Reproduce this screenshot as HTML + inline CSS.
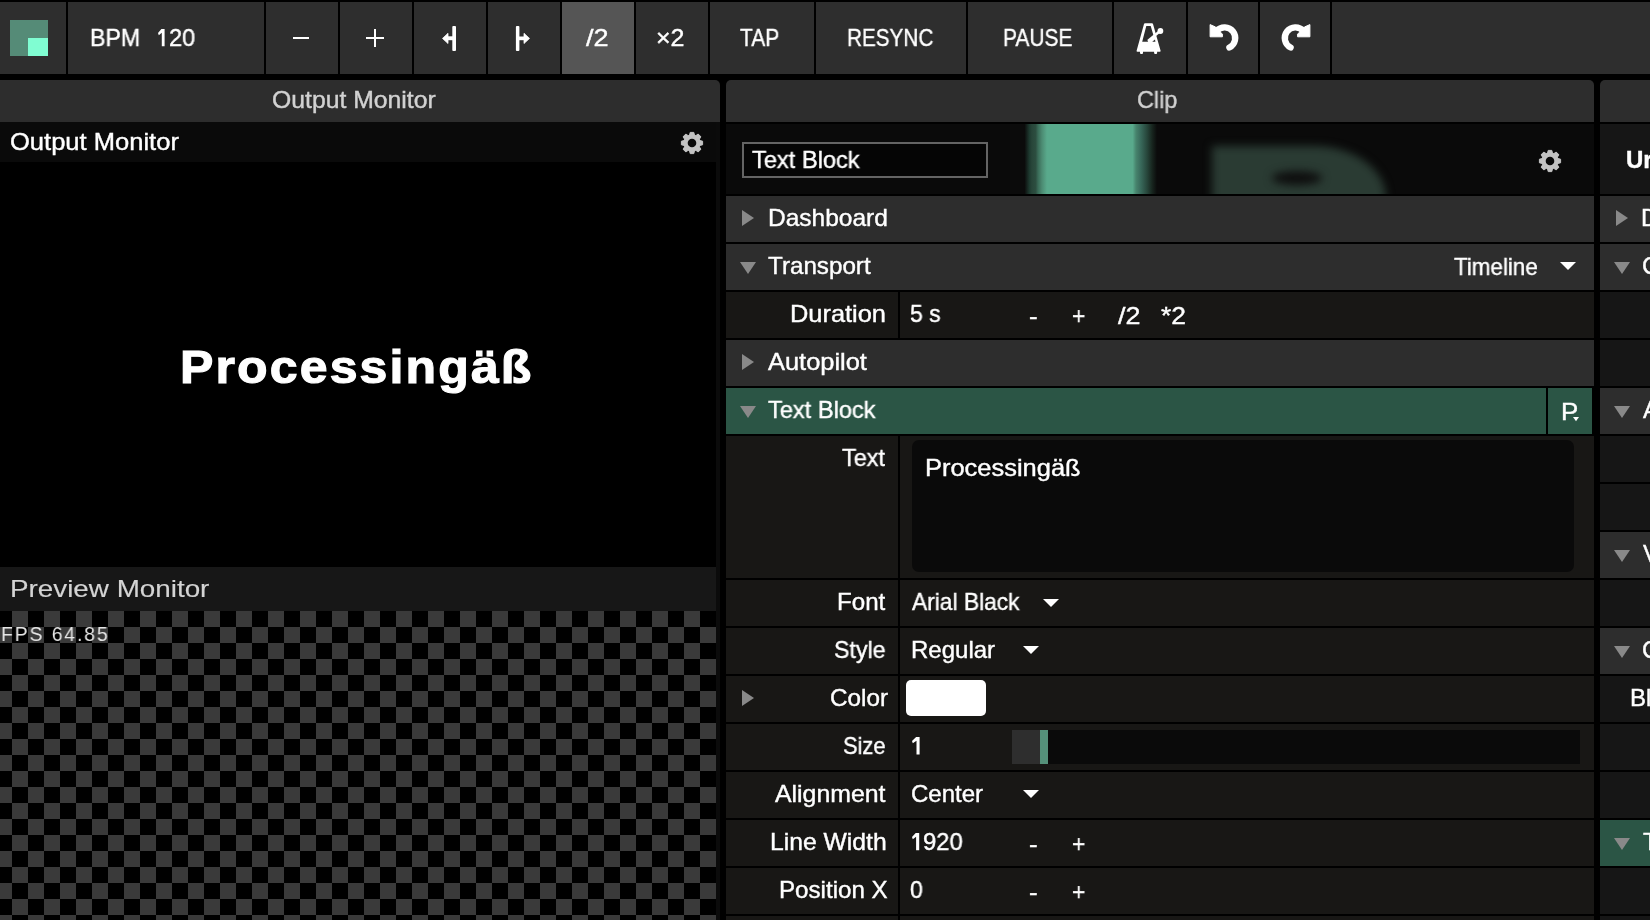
<!DOCTYPE html>
<html><head><meta charset="utf-8"><style>
html,body{margin:0;padding:0;}
body{width:1650px;height:920px;background:#000;position:relative;overflow:hidden;font-family:"Liberation Sans",sans-serif;}
body>div{position:absolute;}
.t{white-space:pre;-webkit-text-stroke:0.4px currentColor;will-change:transform;}
</style></head><body>
<div style="left:0px;top:2px;width:66px;height:72px;background:#2e2e2e;"></div>
<div style="left:68px;top:2px;width:196px;height:72px;background:#2e2e2e;"></div>
<div style="left:266px;top:2px;width:72px;height:72px;background:#2e2e2e;"></div>
<div style="left:340px;top:2px;width:72px;height:72px;background:#2e2e2e;"></div>
<div style="left:414px;top:2px;width:72px;height:72px;background:#2e2e2e;"></div>
<div style="left:488px;top:2px;width:72px;height:72px;background:#2e2e2e;"></div>
<div style="left:562px;top:2px;width:72px;height:72px;background:#555555;"></div>
<div style="left:636px;top:2px;width:72px;height:72px;background:#2e2e2e;"></div>
<div style="left:710px;top:2px;width:104px;height:72px;background:#2e2e2e;"></div>
<div style="left:816px;top:2px;width:150px;height:72px;background:#2e2e2e;"></div>
<div style="left:968px;top:2px;width:144px;height:72px;background:#2e2e2e;"></div>
<div style="left:1114px;top:2px;width:72px;height:72px;background:#2e2e2e;"></div>
<div style="left:1188px;top:2px;width:70px;height:72px;background:#2e2e2e;"></div>
<div style="left:1260px;top:2px;width:70px;height:72px;background:#2e2e2e;"></div>
<div style="left:1332px;top:2px;width:318px;height:72px;background:#2e2e2e;"></div>
<div style="left:10px;top:20px;width:38px;height:36px;background:#558b77;"></div>
<div style="left:28px;top:38px;width:20px;height:18px;background:#80fdd2;"></div>
<div class="t" style="left:89.77px;top:26.00px;font-size:24px;line-height:24px;color:#fff;transform:scaleX(0.9646);transform-origin:0 0;">BPM</div>
<svg style="position:absolute;left:156.7px;top:27.8px;" width="9" height="19" viewBox="0 0 9 19"><polygon points="7.60,1.00 7.60,18.30 4.80,18.30 4.80,4.70 1.80,7.30 1.00,5.00 4.40,1.00" fill="#fff"/></svg>
<div class="t" style="left:168.72px;top:26.00px;font-size:24px;line-height:24px;color:#fff;transform:scaleX(0.9840);transform-origin:0 0;">20</div>
<div style="left:293px;top:36.5px;width:16px;height:2.0px;background:#fff;"></div>
<div style="left:366px;top:36.5px;width:18px;height:2.0px;background:#fff;"></div>
<div style="left:374px;top:28.5px;width:2px;height:18.0px;background:#fff;"></div>
<svg style="position:absolute;left:440px;top:24px;" width="20" height="30" viewBox="0 0 20 30"><rect x="12.3" y="2" width="3.7" height="25" rx="0.9" fill="#fff"/><rect x="7" y="12.3" width="7" height="3.9" fill="#fff"/><polygon points="2.5,14.4 8,9.3 8,19.5" fill="#fff" stroke="#fff" stroke-width="0.8" stroke-linejoin="round"/></svg>
<svg style="position:absolute;left:510px;top:24px;" width="24" height="30" viewBox="0 0 24 30"><rect x="5.9" y="2" width="3.5" height="25" rx="0.9" fill="#fff"/><rect x="8" y="12.5" width="7" height="3.7" fill="#fff"/><polygon points="19.5,14.4 14,9.3 14,19.5" fill="#fff" stroke="#fff" stroke-width="0.8" stroke-linejoin="round"/></svg>
<div class="t" style="left:585.80px;top:26.00px;font-size:24px;line-height:24px;color:#fff;transform:scaleX(1.1263);transform-origin:0 0;">/2</div>
<div class="t" style="left:655.92px;top:26.00px;font-size:24px;line-height:24px;color:#fff;transform:scaleX(1.0417);transform-origin:0 0;">×2</div>
<div class="t" style="left:740.30px;top:26.00px;font-size:24px;line-height:24px;color:#fff;transform:scaleX(0.8705);transform-origin:0 0;">TAP</div>
<div class="t" style="left:847.27px;top:26.00px;font-size:24px;line-height:24px;color:#fff;transform:scaleX(0.8629);transform-origin:0 0;">RESYNC</div>
<div class="t" style="left:1003.25px;top:26.00px;font-size:24px;line-height:24px;color:#fff;transform:scaleX(0.8727);transform-origin:0 0;">PAUSE</div>
<svg style="position:absolute;left:1130px;top:18px;" width="40" height="40" viewBox="0 0 40 40"><path fill="#fff" fill-rule="evenodd" d="M15 5.2 L22 5.2 Q22.8 5.2 23 6 L30.6 32.8 Q30.8 33.8 29.8 33.8 L7.4 33.8 Q6.4 33.8 6.6 32.8 L14 6 Q14.2 5.2 15 5.2 Z M16.3 8 L20.7 8 L23.5 17.5 L17.6 23.7 L12.2 23.7 Z M22.2 23.7 L25 21.5 L25.4 23.7 Z"/><rect x="10" y="32" width="3" height="4" rx="1" fill="#fff"/><rect x="24.1" y="32" width="3" height="4" rx="1" fill="#fff"/><line x1="18" y1="23" x2="29.5" y2="13.5" stroke="#fff" stroke-width="2.6"/><circle cx="30.4" cy="13" r="2.9" fill="#fff"/></svg>
<svg style="position:absolute;left:1200px;top:18px;" width="45" height="40" viewBox="0 0 45 40"><path d="M16.6 13.0 A10.65 10.65 0 1 1 29.4 29.55" fill="none" stroke="#fff" stroke-width="6.3" stroke-linecap="round"/><path d="M10.1 6.6 L15.6 9.0 L22.4 16.2 L22.4 18.8 L10.1 18.8 Z" fill="#fff" stroke="#fff" stroke-width="1" stroke-linejoin="round"/></svg>
<svg style="position:absolute;left:1275px;top:18px;transform:scaleX(-1);" width="45" height="40" viewBox="0 0 45 40"><path d="M16.6 13.0 A10.65 10.65 0 1 1 29.4 29.55" fill="none" stroke="#fff" stroke-width="6.3" stroke-linecap="round"/><path d="M10.1 6.6 L15.6 9.0 L22.4 16.2 L22.4 18.8 L10.1 18.8 Z" fill="#fff" stroke="#fff" stroke-width="1" stroke-linejoin="round"/></svg>
<div style="left:0px;top:80px;width:720px;height:42px;background:#2d2d2d;border-top-right-radius:5px;"></div>
<div class="t" style="left:271.57px;top:88.00px;font-size:24px;line-height:24px;color:#d2d2d2;transform:scaleX(1.0310);transform-origin:0 0;">Output Monitor</div>
<div style="left:0px;top:122px;width:720px;height:798px;background:#0b0b0b;"></div>
<div style="left:0px;top:122px;width:716px;height:40px;background:#0a0a0a;"></div>
<div class="t" style="left:9.64px;top:130.00px;font-size:24px;line-height:24px;color:#fff;transform:scaleX(1.0639);transform-origin:0 0;">Output Monitor</div>
<div style="left:0px;top:162px;width:716px;height:405px;background:#000;"></div>
<div class="t" style="left:179.87px;top:343.00px;font-size:47px;line-height:47px;color:#fff;font-weight:bold;transform:scaleX(1.0640);transform-origin:0 0;-webkit-text-stroke:1.1px #fff;letter-spacing:2px;">Processingäß</div>
<div style="left:0px;top:567px;width:716px;height:44px;background:#171717;"></div>
<div class="t" style="left:9.68px;top:576.60px;font-size:24px;line-height:24px;color:#d4d4d4;transform:scaleX(1.1588);transform-origin:0 0;-webkit-text-stroke:0.15px #d4d4d4;">Preview Monitor</div>
<div style="left:0;top:611px;width:716px;height:309px;background:conic-gradient(#3a3a3a 25%,#000 0 50%,#3a3a3a 0 75%,#000 0) -4px 0/32px 32px;"></div>
<div class="t" style="left:1.45px;top:622.70px;font-size:21px;line-height:21px;color:#e6e6e6;transform:scaleX(0.9265);transform-origin:0 0;-webkit-text-stroke:0;letter-spacing:2px;">FPS 64.85</div>
<svg style="position:absolute;left:680px;top:130.6px;" width="24" height="24" viewBox="0 0 24 24"><g transform="translate(12,12)" fill="#c3c3c3"><circle r="8.5"/><path d="M-2.7 -7 L-1.8 -10.6 L1.8 -10.6 L2.7 -7 Z" stroke="#c3c3c3" stroke-width="1" stroke-linejoin="round" transform="rotate(0)"/><path d="M-2.7 -7 L-1.8 -10.6 L1.8 -10.6 L2.7 -7 Z" stroke="#c3c3c3" stroke-width="1" stroke-linejoin="round" transform="rotate(45)"/><path d="M-2.7 -7 L-1.8 -10.6 L1.8 -10.6 L2.7 -7 Z" stroke="#c3c3c3" stroke-width="1" stroke-linejoin="round" transform="rotate(90)"/><path d="M-2.7 -7 L-1.8 -10.6 L1.8 -10.6 L2.7 -7 Z" stroke="#c3c3c3" stroke-width="1" stroke-linejoin="round" transform="rotate(135)"/><path d="M-2.7 -7 L-1.8 -10.6 L1.8 -10.6 L2.7 -7 Z" stroke="#c3c3c3" stroke-width="1" stroke-linejoin="round" transform="rotate(180)"/><path d="M-2.7 -7 L-1.8 -10.6 L1.8 -10.6 L2.7 -7 Z" stroke="#c3c3c3" stroke-width="1" stroke-linejoin="round" transform="rotate(225)"/><path d="M-2.7 -7 L-1.8 -10.6 L1.8 -10.6 L2.7 -7 Z" stroke="#c3c3c3" stroke-width="1" stroke-linejoin="round" transform="rotate(270)"/><path d="M-2.7 -7 L-1.8 -10.6 L1.8 -10.6 L2.7 -7 Z" stroke="#c3c3c3" stroke-width="1" stroke-linejoin="round" transform="rotate(315)"/><circle r="4.3" fill="#0a0a0a"/></g></svg>
<div style="left:726px;top:80px;width:868px;height:42px;background:#2d2d2d;border-top-left-radius:5px;border-top-right-radius:5px;"></div>
<div class="t" style="left:1137.03px;top:88.00px;font-size:24px;line-height:24px;color:#d2d2d2;transform:scaleX(0.9750);transform-origin:0 0;">Clip</div>
<div style="left:726px;top:124px;width:868px;height:70px;background:#0a0a0a;"></div>
<div style="left:1010px;top:124px;width:150px;height:70px;background:linear-gradient(to right,#0b0b0b 0px,#0b0b0b 14.5px,#1e3a30 19.4px,#28463a 22px,#2c4e40 25.7px,#3a6b58 28px,#4c8c73 32px,#59aa8c 37px,#59aa8c 122.7px,#47846d 126px,#38685a 131px,#27463b 137px,#18261f 142px,#0b0b0b 147px);"></div>
<div style="left:1190px;top:124px;width:230px;height:70px;overflow:hidden;"><div style="position:absolute;left:22px;top:22px;width:174px;height:80px;border-radius:0 72px 0 0/0 52px 0 0;background:#2a3b33;filter:blur(4.5px);"></div><div style="position:absolute;left:82px;top:47px;width:50px;height:14px;border-radius:50%;background:#0e0e0e;filter:blur(4px);"></div></div>
<div style="left:742px;top:142px;width:246px;height:36px;background:#050505;box-sizing:border-box;border:2px solid #646464;"></div>
<div class="t" style="left:752.00px;top:148.00px;font-size:24px;line-height:24px;color:#fff;transform:scaleX(0.9844);transform-origin:0 0;">Text Block</div>
<svg style="position:absolute;left:1538.2px;top:149px;" width="24" height="24" viewBox="0 0 24 24"><g transform="translate(12,12)" fill="#c3c3c3"><circle r="8.5"/><path d="M-2.7 -7 L-1.8 -10.6 L1.8 -10.6 L2.7 -7 Z" stroke="#c3c3c3" stroke-width="1" stroke-linejoin="round" transform="rotate(0)"/><path d="M-2.7 -7 L-1.8 -10.6 L1.8 -10.6 L2.7 -7 Z" stroke="#c3c3c3" stroke-width="1" stroke-linejoin="round" transform="rotate(45)"/><path d="M-2.7 -7 L-1.8 -10.6 L1.8 -10.6 L2.7 -7 Z" stroke="#c3c3c3" stroke-width="1" stroke-linejoin="round" transform="rotate(90)"/><path d="M-2.7 -7 L-1.8 -10.6 L1.8 -10.6 L2.7 -7 Z" stroke="#c3c3c3" stroke-width="1" stroke-linejoin="round" transform="rotate(135)"/><path d="M-2.7 -7 L-1.8 -10.6 L1.8 -10.6 L2.7 -7 Z" stroke="#c3c3c3" stroke-width="1" stroke-linejoin="round" transform="rotate(180)"/><path d="M-2.7 -7 L-1.8 -10.6 L1.8 -10.6 L2.7 -7 Z" stroke="#c3c3c3" stroke-width="1" stroke-linejoin="round" transform="rotate(225)"/><path d="M-2.7 -7 L-1.8 -10.6 L1.8 -10.6 L2.7 -7 Z" stroke="#c3c3c3" stroke-width="1" stroke-linejoin="round" transform="rotate(270)"/><path d="M-2.7 -7 L-1.8 -10.6 L1.8 -10.6 L2.7 -7 Z" stroke="#c3c3c3" stroke-width="1" stroke-linejoin="round" transform="rotate(315)"/><circle r="4.3" fill="#0a0a0a"/></g></svg>
<div style="left:726px;top:196px;width:868px;height:46px;background:#2d2d2d;"></div>
<svg style="position:absolute;left:742px;top:210px;" width="12" height="16" viewBox="0 0 12 16"><polygon points="0,0 12,8.0 0,16" fill="#898989"/></svg>
<div class="t" style="left:767.56px;top:206.00px;font-size:24px;line-height:24px;color:#fff;transform:scaleX(1.0211);transform-origin:0 0;">Dashboard</div>
<div style="left:726px;top:244px;width:868px;height:46px;background:#2d2d2d;"></div>
<svg style="position:absolute;left:740px;top:262px;" width="16" height="12" viewBox="0 0 16 12"><polygon points="0,0 16,0 8.0,12" fill="#898989"/></svg>
<div class="t" style="left:768.40px;top:254.00px;font-size:24px;line-height:24px;color:#fff;transform:scaleX(1.0078);transform-origin:0 0;">Transport</div>
<div class="t" style="left:1454.00px;top:255.00px;font-size:24px;line-height:24px;color:#fff;transform:scaleX(0.9326);transform-origin:0 0;">Timeline</div>
<svg style="position:absolute;left:1560px;top:262px;" width="16" height="8" viewBox="0 0 16 8"><polygon points="0,0 16,0 8.0,8" fill="#fff"/></svg>
<div style="left:726px;top:292px;width:172px;height:46px;background:#181715;"></div>
<div style="left:900px;top:292px;width:694px;height:46px;background:#181715;"></div>
<div class="t" style="left:790.19px;top:302.00px;font-size:24px;line-height:24px;color:#fff;transform:scaleX(1.0575);transform-origin:0 0;">Duration</div>
<div class="t" style="left:909.74px;top:302.00px;font-size:24px;line-height:24px;color:#fff;transform:scaleX(0.9567);transform-origin:0 0;">5 s</div>
<div class="t" style="left:1029.42px;top:304.00px;font-size:24px;line-height:24px;color:#fff;transform:scaleX(1.0833);transform-origin:0 0;">-</div>
<div class="t" style="left:1071.84px;top:304.00px;font-size:24px;line-height:24px;color:#fff;transform:scaleX(0.9583);transform-origin:0 0;">+</div>
<div class="t" style="left:1117.70px;top:304.00px;font-size:24px;line-height:24px;color:#fff;transform:scaleX(1.1211);transform-origin:0 0;">/2</div>
<div class="t" style="left:1160.80px;top:304.00px;font-size:24px;line-height:24px;color:#fff;transform:scaleX(1.1000);transform-origin:0 0;">*2</div>
<div style="left:726px;top:340px;width:868px;height:46px;background:#2d2d2d;"></div>
<svg style="position:absolute;left:742px;top:354px;" width="12" height="16" viewBox="0 0 12 16"><polygon points="0,0 12,8.0 0,16" fill="#898989"/></svg>
<div class="t" style="left:768.40px;top:350.00px;font-size:24px;line-height:24px;color:#fff;transform:scaleX(1.0591);transform-origin:0 0;">Autopilot</div>
<div style="left:726px;top:388px;width:820px;height:46px;background:#2b5545;"></div>
<svg style="position:absolute;left:740px;top:406px;" width="16" height="12" viewBox="0 0 16 12"><polygon points="0,0 16,0 8.0,12" fill="#898989"/></svg>
<div class="t" style="left:768.40px;top:398.00px;font-size:24px;line-height:24px;color:#fff;transform:scaleX(0.9835);transform-origin:0 0;">Text Block</div>
<div style="left:1548px;top:388px;width:44px;height:46px;background:#2b5545;"></div>
<div class="t" style="left:1560.85px;top:399.70px;font-size:24px;line-height:24px;color:#fff;transform:scaleX(1.0769);transform-origin:0 0;">P</div>
<svg style="position:absolute;left:1573px;top:416.5px;" width="6" height="5" viewBox="0 0 6 5"><polygon points="0,0 6,0 3,4.3" fill="#fff"/></svg>
<div style="left:726px;top:436px;width:172px;height:142px;background:#181715;"></div>
<div style="left:900px;top:436px;width:694px;height:142px;background:#181715;"></div>
<div class="t" style="left:842.20px;top:446.00px;font-size:24px;line-height:24px;color:#fff;transform:scaleX(0.9773);transform-origin:0 0;">Text</div>
<div style="left:912px;top:440px;width:662px;height:132px;background:#0a0a0a;border-radius:7px;"></div>
<div class="t" style="left:925.18px;top:455.70px;font-size:24px;line-height:24px;color:#fff;transform:scaleX(1.0604);transform-origin:0 0;">Processingäß</div>
<div style="left:726px;top:580px;width:172px;height:46px;background:#181715;"></div>
<div style="left:900px;top:580px;width:694px;height:46px;background:#181715;"></div>
<div class="t" style="left:836.99px;top:590.00px;font-size:24px;line-height:24px;color:#fff;transform:scaleX(1.0043);transform-origin:0 0;">Font</div>
<div class="t" style="left:912.20px;top:590.30px;font-size:24px;line-height:24px;color:#fff;transform:scaleX(0.9487);transform-origin:0 0;">Arial Black</div>
<svg style="position:absolute;left:1043px;top:599px;" width="16" height="8" viewBox="0 0 16 8"><polygon points="0,0 16,0 8.0,8" fill="#fff"/></svg>
<div style="left:726px;top:628px;width:172px;height:46px;background:#181715;"></div>
<div style="left:900px;top:628px;width:694px;height:46px;background:#181715;"></div>
<div class="t" style="left:833.63px;top:638.00px;font-size:24px;line-height:24px;color:#fff;transform:scaleX(0.9654);transform-origin:0 0;">Style</div>
<div class="t" style="left:910.61px;top:638.00px;font-size:24px;line-height:24px;color:#fff;">Regular</div>
<svg style="position:absolute;left:1022.5px;top:646px;" width="16" height="8" viewBox="0 0 16 8"><polygon points="0,0 16,0 8.0,8" fill="#fff"/></svg>
<div style="left:726px;top:676px;width:172px;height:46px;background:#181715;"></div>
<div style="left:900px;top:676px;width:694px;height:46px;background:#181715;"></div>
<div class="t" style="left:829.59px;top:686.00px;font-size:24px;line-height:24px;color:#fff;transform:scaleX(1.0107);transform-origin:0 0;">Color</div>
<svg style="position:absolute;left:742px;top:690px;" width="12" height="16" viewBox="0 0 12 16"><polygon points="0,0 12,8.0 0,16" fill="#898989"/></svg>
<div style="left:906px;top:680px;width:80px;height:36px;background:#fff;border-radius:5px;"></div>
<div style="left:726px;top:724px;width:172px;height:46px;background:#181715;"></div>
<div style="left:900px;top:724px;width:694px;height:46px;background:#181715;"></div>
<div class="t" style="left:842.79px;top:734.00px;font-size:24px;line-height:24px;color:#fff;transform:scaleX(0.9133);transform-origin:0 0;">Size</div>
<svg style="position:absolute;left:910.5px;top:735.5px;" width="10" height="20" viewBox="0 0 10 20"><polygon points="8.60,1.00 8.60,18.60 5.50,18.60 5.50,4.70 1.80,7.30 1.00,5.00 5.10,1.00" fill="#fff"/></svg>
<div style="left:1012px;top:730px;width:28px;height:34px;background:#2e2e2e;"></div>
<div style="left:1040px;top:730px;width:8px;height:34px;background:#55917a;"></div>
<div style="left:1048px;top:730px;width:532px;height:34px;background:#0a0a0a;"></div>
<div style="left:726px;top:772px;width:172px;height:46px;background:#181715;"></div>
<div style="left:900px;top:772px;width:694px;height:46px;background:#181715;"></div>
<div class="t" style="left:774.60px;top:782.00px;font-size:24px;line-height:24px;color:#fff;transform:scaleX(1.0355);transform-origin:0 0;">Alignment</div>
<div class="t" style="left:911.00px;top:782.00px;font-size:24px;line-height:24px;color:#fff;">Center</div>
<svg style="position:absolute;left:1022.5px;top:790px;" width="16" height="8" viewBox="0 0 16 8"><polygon points="0,0 16,0 8.0,8" fill="#fff"/></svg>
<div style="left:726px;top:820px;width:172px;height:46px;background:#181715;"></div>
<div style="left:900px;top:820px;width:694px;height:46px;background:#181715;"></div>
<div class="t" style="left:770.14px;top:830.00px;font-size:24px;line-height:24px;color:#fff;transform:scaleX(1.0291);transform-origin:0 0;">Line Width</div>
<svg style="position:absolute;left:910.7px;top:831.8px;" width="9" height="19" viewBox="0 0 9 19"><polygon points="8.20,1.00 8.20,18.30 5.10,18.30 5.10,4.70 1.80,7.30 1.00,5.00 4.70,1.00" fill="#fff"/></svg>
<div class="t" style="left:922.81px;top:830.00px;font-size:24px;line-height:24px;color:#fff;transform:scaleX(0.9921);transform-origin:0 0;">920</div>
<div class="t" style="left:1029.42px;top:832.00px;font-size:24px;line-height:24px;color:#fff;transform:scaleX(1.0833);transform-origin:0 0;">-</div>
<div class="t" style="left:1071.84px;top:832.00px;font-size:24px;line-height:24px;color:#fff;transform:scaleX(0.9583);transform-origin:0 0;">+</div>
<div style="left:726px;top:868px;width:172px;height:46px;background:#181715;"></div>
<div style="left:900px;top:868px;width:694px;height:46px;background:#181715;"></div>
<div class="t" style="left:778.69px;top:878.00px;font-size:24px;line-height:24px;color:#fff;transform:scaleX(1.0057);transform-origin:0 0;">Position X</div>
<div class="t" style="left:909.94px;top:878.00px;font-size:24px;line-height:24px;color:#fff;transform:scaleX(0.9583);transform-origin:0 0;">0</div>
<div class="t" style="left:1029.42px;top:880.00px;font-size:24px;line-height:24px;color:#fff;transform:scaleX(1.0833);transform-origin:0 0;">-</div>
<div class="t" style="left:1071.84px;top:880.00px;font-size:24px;line-height:24px;color:#fff;transform:scaleX(0.9583);transform-origin:0 0;">+</div>
<div style="left:726px;top:916px;width:172px;height:46px;background:#181715;"></div>
<div style="left:900px;top:916px;width:694px;height:46px;background:#181715;"></div>

<div style="left:1600px;top:80px;width:60px;height:42px;background:#2d2d2d;border-top-left-radius:5px;"></div>
<div style="left:1600px;top:124px;width:50px;height:70px;background:#161616;"></div>
<div class="t" style="left:1626.00px;top:148.00px;font-size:24px;line-height:24px;color:#fff;font-weight:bold;">Ur</div>
<div style="left:1600px;top:196px;width:50px;height:46px;background:#2d2d2d;"></div>
<svg style="position:absolute;left:1616px;top:210px;" width="12" height="16" viewBox="0 0 12 16"><polygon points="0,0 12,8.0 0,16" fill="#898989"/></svg>
<div class="t" style="left:1640.60px;top:206.00px;font-size:24px;line-height:24px;color:#fff;">D</div>
<div style="left:1600px;top:244px;width:50px;height:46px;background:#2d2d2d;"></div>
<svg style="position:absolute;left:1614px;top:262px;" width="16" height="12" viewBox="0 0 16 12"><polygon points="0,0 16,0 8.0,12" fill="#898989"/></svg>
<div class="t" style="left:1641.60px;top:254.00px;font-size:24px;line-height:24px;color:#fff;">C</div>
<div style="left:1600px;top:292px;width:50px;height:46px;background:#161616;"></div>
<div style="left:1600px;top:340px;width:50px;height:46px;background:#161616;"></div>
<div style="left:1600px;top:388px;width:50px;height:46px;background:#2d2d2d;"></div>
<svg style="position:absolute;left:1614px;top:406px;" width="16" height="12" viewBox="0 0 16 12"><polygon points="0,0 16,0 8.0,12" fill="#898989"/></svg>
<div class="t" style="left:1642.60px;top:398.00px;font-size:24px;line-height:24px;color:#fff;">A</div>
<div style="left:1600px;top:436px;width:50px;height:46px;background:#161616;"></div>
<div style="left:1600px;top:484px;width:50px;height:46px;background:#161616;"></div>
<div style="left:1600px;top:532px;width:50px;height:46px;background:#2d2d2d;"></div>
<svg style="position:absolute;left:1614px;top:550px;" width="16" height="12" viewBox="0 0 16 12"><polygon points="0,0 16,0 8.0,12" fill="#898989"/></svg>
<div class="t" style="left:1642.60px;top:542.00px;font-size:24px;line-height:24px;color:#fff;">V</div>
<div style="left:1600px;top:580px;width:50px;height:46px;background:#161616;"></div>
<div style="left:1600px;top:628px;width:50px;height:46px;background:#2d2d2d;"></div>
<svg style="position:absolute;left:1614px;top:646px;" width="16" height="12" viewBox="0 0 16 12"><polygon points="0,0 16,0 8.0,12" fill="#898989"/></svg>
<div class="t" style="left:1641.60px;top:638.00px;font-size:24px;line-height:24px;color:#fff;">C</div>
<div style="left:1600px;top:676px;width:50px;height:46px;background:#161616;"></div>
<div class="t" style="left:1629.60px;top:686.00px;font-size:24px;line-height:24px;color:#fff;">Bl</div>
<div style="left:1600px;top:724px;width:50px;height:46px;background:#161616;"></div>
<div style="left:1600px;top:772px;width:50px;height:46px;background:#161616;"></div>
<div style="left:1600px;top:820px;width:50px;height:46px;background:#2b5545;"></div>
<svg style="position:absolute;left:1614px;top:838px;" width="16" height="12" viewBox="0 0 16 12"><polygon points="0,0 16,0 8.0,12" fill="#898989"/></svg>
<div class="t" style="left:1642.60px;top:830.00px;font-size:24px;line-height:24px;color:#fff;">T</div>
<div style="left:1600px;top:868px;width:50px;height:46px;background:#161616;"></div>
<div style="left:1600px;top:916px;width:50px;height:46px;background:#161616;"></div>
</body></html>
